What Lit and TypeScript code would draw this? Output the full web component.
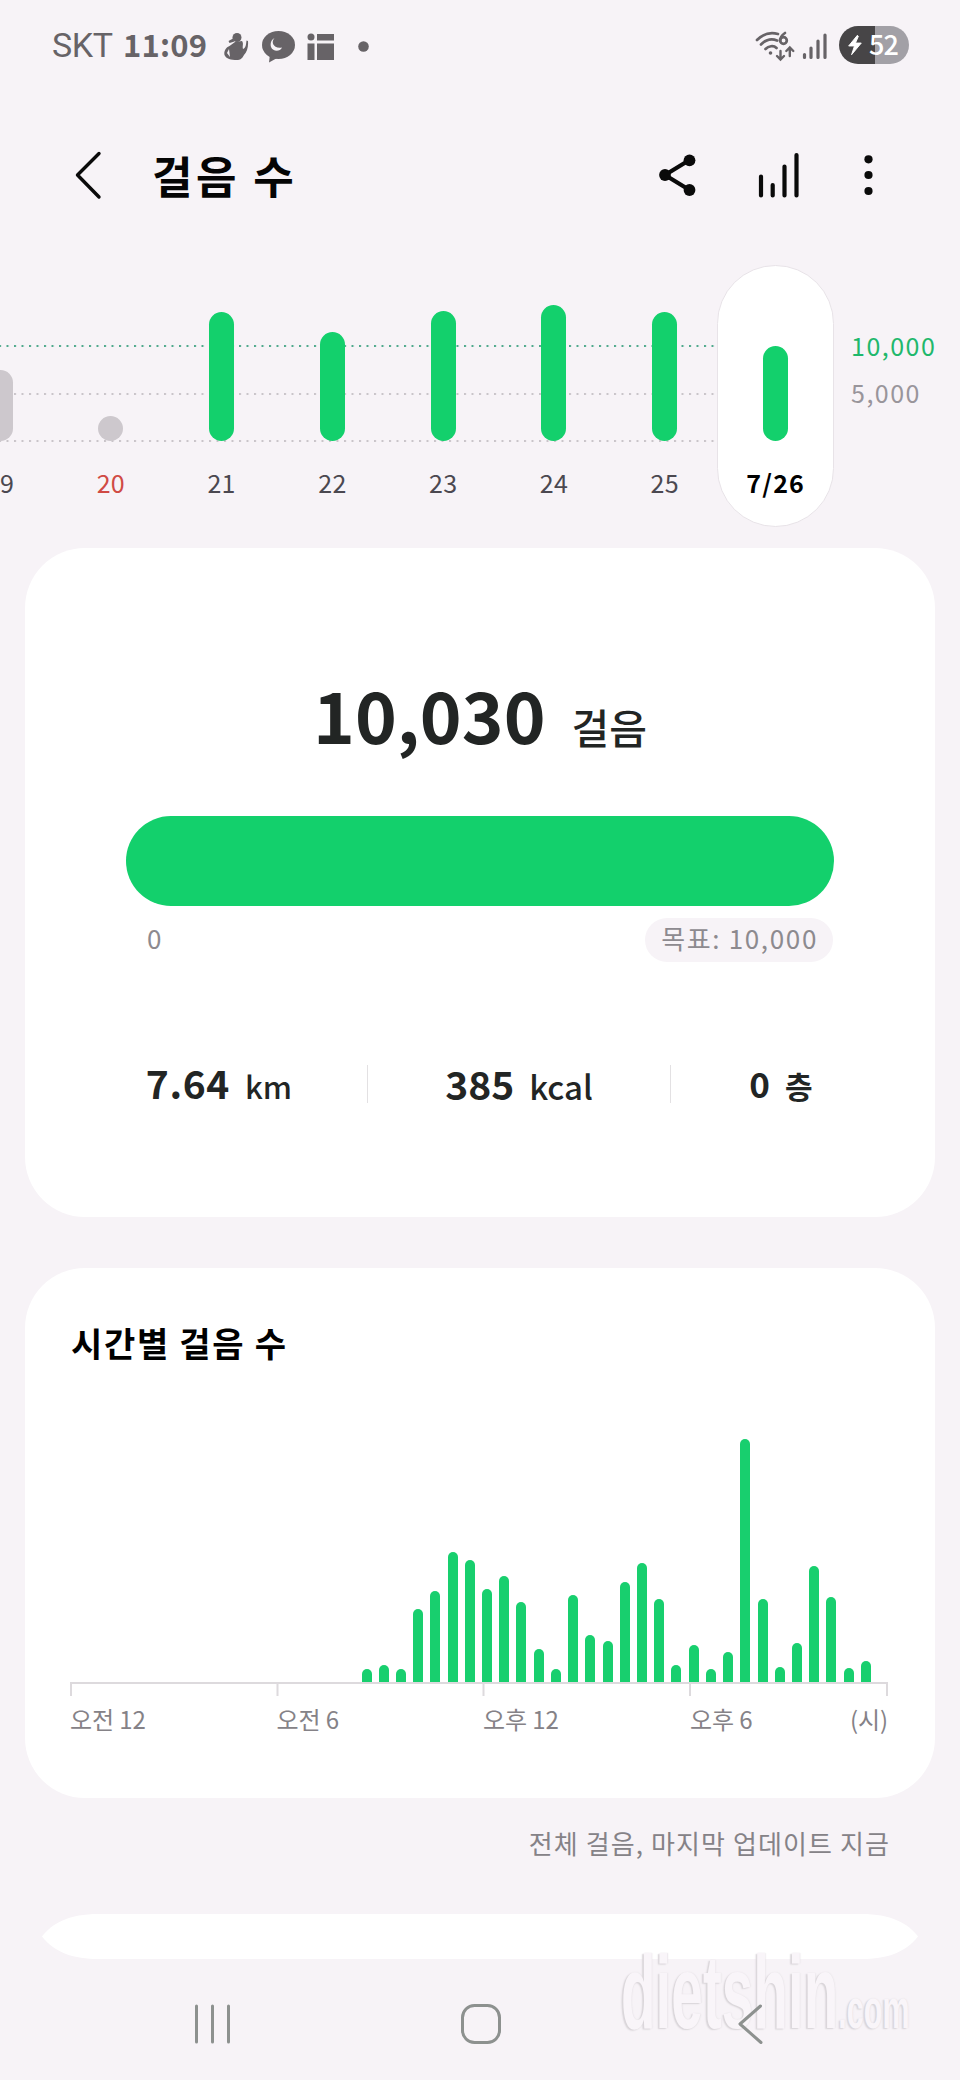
import { LitElement, html, css, svg } from "lit";
import { customElement } from "lit/decorators.js";
import { classMap } from "lit/directives/class-map.js";
import { styleMap } from "lit/directives/style-map.js";

interface Day { label: string; height: number; kind: "goal" | "under"; sunday?: boolean; today?: boolean }

const DAYS: Day[] = [
  { label: "19", height: 71, kind: "under" },
  { label: "20", height: 25, kind: "under", sunday: true },
  { label: "21", height: 129.5, kind: "goal" },
  { label: "22", height: 109, kind: "goal" },
  { label: "23", height: 130.5, kind: "goal" },
  { label: "24", height: 136, kind: "goal" },
  { label: "25", height: 129, kind: "goal" },
  { label: "7/26", height: 95, kind: "goal", today: true },
];

// Half-hour buckets, starting at 09:00, as pixel heights over the axis.
const HOURLY = [13, 17, 13, 73, 91, 130, 122, 93, 106, 80, 33, 13, 87, 47, 41, 100, 119, 83, 17, 37, 13, 30, 243, 83, 15, 39, 116, 85, 14, 21];

@customElement("status-bar")
export class StatusBar extends LitElement {
  static styles = css`
    :host { display: flex; height: 90px; padding: 0 51px 0 52px; box-sizing: border-box; align-items: center; color: #676367; }
    .carrier { font: 400 34px/40px Roboto, sans-serif; letter-spacing: -0.400px; width: 71px; }
    .time { font: 700 31px/40px "Noto Sans CJK KR", sans-serif; letter-spacing: 0.200px; width: 101px; margin-top: -3px; }
    .icons { flex: 1; height: 90px; }
    .radio { width: 86px; height: 90px; }
    .battery { width: 70px; height: 38px; border-radius: 19px; background: linear-gradient(90deg, #474547 36px, #a2a0a6 36px); display: flex; align-items: center; color: #fff; }
    .bolt { width: 30px; height: 38px; }
    .level { font: 500 27px/38px "Noto Sans CJK KR", sans-serif; letter-spacing: -0.800px; margin-top: -2px; }
  `;
  render() {
    return html`
      <span class="carrier">SKT</span><span class="time">11:09</span>
      <svg class="icons" viewBox="224 0 529 90" preserveAspectRatio="xMinYMid meet" fill="#676367">
        <circle cx="237" cy="37.500" r="4.500"/>
        <path d="M233 38.500l-4.500 2.500 1 2 5-1.500zM235 42l7-1c2 3 0 5 1 8 3-1 3-5 3.500-8.500l1.500.500c.500 6-1 11-4 14-2 4-4 5-7 5-6 0-11-1-12.500-5-1-4 2-8 5-9z"/>
        <path d="M229 49l-2 4 3 4z" fill="#f7f3f7"/>
        <ellipse cx="278.500" cy="45" rx="16.500" ry="14"/><path d="M270 54l-1 8.500 9-5z"/>
        <path d="M274.500 38c-4 4-1 11 7.500 9.500-2 4.500-9 4.500-11-.5-1-4 .5-7.500 3.500-9z" fill="#f7f3f7"/>
        <circle cx="311" cy="37" r="3.500"/><path d="M317 34h17v6.500h-17zM307.500 43.500h7V60h-7zM317 43.500h17V60h-17z"/>
        <circle cx="363.500" cy="46.500" r="5.300"/>
      </svg>
      <svg class="radio" viewBox="753 0 86 90" fill="none" stroke="#676367" stroke-width="2.700" stroke-linecap="round">
        <path d="M757 40c6-6 14-8 21-6M761 44.500c5-5 11-6 16-4M765.500 49c3-3 8-4 11-1"/>
        <circle cx="770.500" cy="53" r="1.800" fill="#676367" stroke="none"/>
        <path d="M785 33c-3 2-5 5-5 8" /><circle cx="783.500" cy="40.500" r="3.300"/>
        <path d="M780.500 51v8M777 56l3.500 3.500 3.500-3.500M789.800 56v-8.500M786.300 51l3.500-3.500 3.500 3.500" stroke-width="2.400"/>
        <path d="M804.500 54.500v3M811 48v9.500M818 41v16.500M825 35v22.500" stroke-width="3.200"/>
      </svg>
      <div class="battery">
        <svg class="bolt" viewBox="0 0 31 38"><path d="M19 9l-9 11h6l-3 9 10-12h-6l3-7z" fill="#fff" stroke="#fff" stroke-linejoin="round"/></svg>
        <span class="level">52</span>
      </div>`;
  }
}

@customElement("title-bar")
export class TitleBar extends LitElement {
  static styles = css`
    :host { display: flex; height: 170px; align-items: center; }
    .back { width: 152px; height: 170px; }
    .title { flex: 1; margin: 0; font: 700 44px/60px "Noto Sans CJK KR", sans-serif; letter-spacing: 3.400px; color: #050505; }
    .actions { width: 320px; height: 170px; }
  `;
  render() {
    return html`
      <svg class="back" viewBox="0 90 152 170" fill="none" stroke="#0a0a0a" stroke-width="3.400" stroke-linecap="round" stroke-linejoin="round"><path d="M99 153.500L77.500 175l21.500 22"/></svg>
      <h1 class="title">걸음 수</h1>
      <svg class="actions" viewBox="640 90 320 170" stroke="#0a0a0a" stroke-width="4.200" stroke-linecap="round" fill="#0a0a0a">
        <path d="M689.500 160l-24.500 15 24.500 15" fill="none"/>
        <g stroke="none"><circle cx="689.500" cy="160.300" r="5.900"/><circle cx="665" cy="175" r="5.900"/><circle cx="689.500" cy="190" r="5.900"/></g>
        <path d="M761 176.500v19M772.700 185v10.500M784.500 166.500v29M796.500 155v40.500"/>
        <g stroke="none"><circle cx="868.500" cy="159.300" r="4.100"/><circle cx="868.500" cy="175" r="4.100"/><circle cx="868.500" cy="191" r="4.100"/></g>
      </svg>`;
  }
}

@customElement("week-chart")
export class WeekChart extends LitElement {
  static styles = css`
    :host { display: flex; height: 288px; padding-top: 5px; box-sizing: border-box; overflow: hidden; font: 400 25px/30px "Noto Sans CJK KR", sans-serif; }
    .days { display: flex; width: 831px; height: 262px; flex: none;
      background:
        radial-gradient(circle at 1px 1px, #4fa98c 1.100px, transparent 1.500px) -1px 80px / 7.500px 3px repeat-x,
        radial-gradient(circle at 1px 1px, #c9c4c9 1.100px, transparent 1.500px) -1px 128px / 7.500px 3px repeat-x,
        radial-gradient(circle at 1px 1px, #c9c4c9 1.100px, transparent 1.500px) -1px 175px / 7.500px 3px repeat-x; }
    .day { width: 110.800px; flex: none; display: flex; flex-direction: column; align-items: center; color: #4b4850; }
    .day:first-child { margin-left: -55.400px; }
    .track { height: 176px; display: flex; align-items: flex-end; }
    .bar { width: 25px; border-radius: 12.500px; background: #13d06c; }
    .bar.under { background: #cdc8cd; }
    .label { margin-top: 26px; letter-spacing: 0.300px; }
    .day.sunday { color: #d04a44; }
    .day.today { box-sizing: border-box; width: 117px; height: 262px; margin-left: -3px; background: #fff; border: 1px solid #e8e3e8; border-radius: 59px; color: #000; font-weight: 700; }
    .day.today .track { height: 175px; }
    .day.today .label { letter-spacing: 1.200px; }
    .scale { padding: 65px 0 0 20px; letter-spacing: 1.500px; }
    .goal { color: #1fb86c; }
    .half { color: #99959b; margin-top: 17px; }
  `;
  render() {
    return html`
      <div class="days">
        ${DAYS.map((d) => html`
          <div class=${classMap({ day: true, sunday: !!d.sunday, today: !!d.today })}>
            <div class="track"><div class=${classMap({ bar: true, under: d.kind === "under" })} style=${styleMap({ height: `${d.height}px` })}></div></div>
            <div class="label">${d.label}</div>
          </div>`)}
      </div>
      <div class="scale"><div class="goal">10,000</div><div class="half">5,000</div></div>`;
  }
}

@customElement("summary-card")
export class SummaryCard extends LitElement {
  static styles = css`
    :host { display: block; height: 669px; margin: 0 25px; padding: 118px 101px 0; box-sizing: border-box; background: #fff; border-radius: 60px; color: #222524; font-family: "Noto Sans CJK KR", sans-serif; }
    .count { display: flex; justify-content: center; align-items: baseline; height: 150px; margin-top: -5px; padding-bottom: 5px; }
    .number { font-size: 71px; line-height: 104px; font-weight: 700; }
    .unit { font-size: 41px; font-weight: 500; margin-left: 26px; }
    .progress { height: 90px; border-radius: 45px; background: #13d06c; }
    .range { display: flex; justify-content: space-between; align-items: center; margin-top: 12px; height: 44px; padding: 0 1px 0 21px; font-size: 26px; line-height: 40px; color: #8d8a8f; }
    .zero { padding-bottom: 4px; }
    .target { box-sizing: border-box; height: 44px; background: #f7f3f7; border-radius: 22px; padding: 0 15px 0 16px; letter-spacing: 1.650px; }
    .stats { display: flex; align-items: center; height: 38px; margin-top: 103px; }
    .stat { display: flex; align-items: baseline; justify-content: center; gap: 15px; font-weight: 500; font-size: 33px; line-height: 38px; }
    .stat.distance { width: 241px; padding-right: 75px; box-sizing: border-box; justify-content: flex-end; }
    .stat.energy { width: 302px; }
    .stat.floors { flex: 1; padding-left: 57px; }
    .value { font-size: 39px; font-weight: 700; }
    .distance .value { letter-spacing: 0.600px; }
    .distance .name { font-size: 31px; }
    .rule { width: 1px; height: 38px; background: #e3e1e3; }
    .floors .value { font-size: 35px; }
    .floors .name { font-size: 30px; font-weight: 700; }
  `;
  render() {
    return html`
      <div class="count"><span class="number">10,030</span><span class="unit">걸음</span></div>
      <div class="progress"></div>
      <div class="range"><span class="zero">0</span><span class="target">목표: 10,000</span></div>
      <div class="stats">
        <div class="stat distance"><span class="value">7.64</span><span class="name">km</span></div>
        <div class="rule"></div>
        <div class="stat energy"><span class="value">385</span><span class="name">kcal</span></div>
        <div class="rule"></div>
        <div class="stat floors"><span class="value">0</span><span class="name">층</span></div>
      </div>`;
  }
}

@customElement("hourly-card")
export class HourlyCard extends LitElement {
  static styles = css`
    :host { display: block; height: 530px; margin: 51px 25px 0; padding: 50px 47px 0 45px; box-sizing: border-box; background: #fff; border-radius: 60px; font-family: "Noto Sans CJK KR", sans-serif; }
    .title { margin: 0 0 2px 1px; font-size: 34px; line-height: 50px; font-weight: 700; letter-spacing: 1.700px; color: #000; }
    .plot { height: 312px; display: flex; align-items: flex-end; gap: 7.220px; padding-left: 291.500px; }
    .bar { width: 10px; flex: none; border-radius: 5px 5px 0 0; background: #18cf6e; }
    .axis { display: block; width: 818px; height: 14px; }
    .labels { display: grid; grid-template-columns: 206.500px 206.500px 207px 1fr auto; margin-top: 8px; font-size: 24px; line-height: 30px; color: #858287; letter-spacing: -0.100px; }
  `;
  render() {
    return html`
      <h2 class="title">시간별 걸음 수</h2>
      <div class="plot">${HOURLY.map((h) => html`<div class="bar" style=${styleMap({ height: `${h}px` })}></div>`)}</div>
      <svg class="axis" viewBox="70 1682 818 14" fill="none" stroke="#dddadd" stroke-width="2">${svg`<path d="M70 1683h818M71 1683v13M277.500 1683v13M483.500 1683v13M690 1683v13M887 1683v13"/>`}</svg>
      <div class="labels"><span>오전 12</span><span>오전 6</span><span>오후 12</span><span>오후 6</span><span>(시)</span></div>`;
  }
}

@customElement("app-root")
export class AppRoot extends LitElement {
  static styles = css`
    :host { display: block; position: relative; width: 960px; height: 2080px; overflow: hidden; background: #f7f3f7; }
    .note { margin: 0; padding: 25px 70px 2px 0; text-align: right; font: 400 26px/40px "Noto Sans CJK KR", sans-serif; letter-spacing: 1.100px; color: #858287; }
    .peek { display: block; width: 960px; height: 46px; margin-top: 48px; }
    .nav { display: block; position: relative; width: 960px; height: 121px; }
    .mark { position: absolute; left: 621px; top: 1937px; display: flex; align-items: baseline; transform: scaleX(0.545); transform-origin: 0 0; font: 700 104px/110px "Liberation Sans", sans-serif; color: #f9f5f9; text-shadow: -3px 1px 2px #d8d4d8, 1px 0 2px #e6e2e6; }
    .suffix { font-size: 56px; }
  `;
  render() {
    return html`
      <status-bar></status-bar>
      <title-bar></title-bar>
      <week-chart></week-chart>
      <summary-card></summary-card>
      <hourly-card></hourly-card>
      <p class="note">전체 걸음, 마지막 업데이트 지금</p>
      <svg class="peek" viewBox="0 1913 960 46"><path d="M98 1914H862C890 1914 908 1923 918 1936.500C905 1953 886 1959 862 1959H98C74 1959 55 1953 42 1936.500C52 1923 70 1914 98 1914Z" fill="#fff"/></svg>
      <div class="mark"><span>dietshin</span><span class="suffix">.com</span></div>
      <svg class="nav" viewBox="0 1959 960 121" fill="none" stroke="#8d918f" stroke-width="3" stroke-linecap="round" stroke-linejoin="round">
        <path d="M196.500 2006v36M212.500 2006v36M228.500 2006v36M760.500 2006L740 2024l21 18.500"/>
        <rect x="462.500" y="2005.500" width="37" height="37" rx="12"/>
      </svg>`;
  }
}
